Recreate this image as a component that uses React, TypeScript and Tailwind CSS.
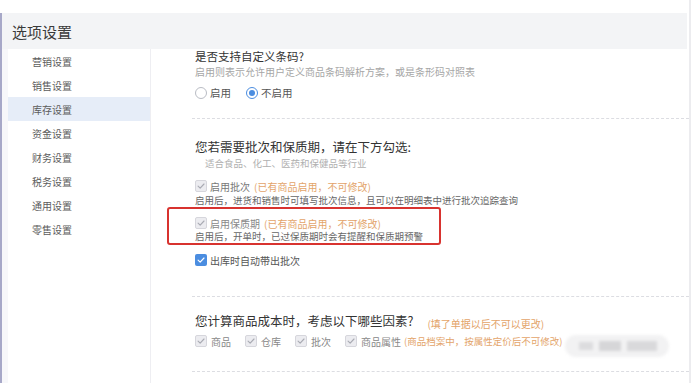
import type { ReactNode } from "react";

const menuItems = [
  "营销设置",
  "销售设置",
  "库存设置",
  "资金设置",
  "财务设置",
  "税务设置",
  "通用设置",
  "零售设置",
];

function CheckMark({ color }: { color: string }) {
  return (
    <svg viewBox="0 0 12 12" className="h-[10px] w-[10px]">
      <path
        d="M2.5 6.2 L5 8.6 L9.6 3.6"
        fill="none"
        stroke={color}
        strokeWidth="1.4"
        strokeLinecap="round"
        strokeLinejoin="round"
      />
    </svg>
  );
}

function Checkbox({ checked = false, disabled = false }: { checked?: boolean; disabled?: boolean }) {
  if (disabled) {
    return (
      <span className="flex h-[12px] w-[12px] shrink-0 items-center justify-center rounded-[2px] border border-[#d6d6dc] bg-[#ececf0]">
        <CheckMark color="#a9abb3" />
      </span>
    );
  }
  return (
    <span className="flex h-[12px] w-[12px] shrink-0 items-center justify-center rounded-[2px] bg-[#4b8de0]">
      {checked && <CheckMark color="#ffffff" />}
    </span>
  );
}

function Radio({ checked = false }: { checked?: boolean }) {
  return (
    <span
      className={
        checked
          ? "flex h-[12px] w-[12px] items-center justify-center rounded-full border border-[#4b8de0] bg-white"
          : "flex h-[12px] w-[12px] items-center justify-center rounded-full border border-[#b9bcc4] bg-white"
      }
    >
      {checked && <span className="h-[6px] w-[6px] rounded-full bg-[#4b8de0]" />}
    </span>
  );
}

function Note({ children }: { children: ReactNode }) {
  return <span className="text-[10px] text-[#e3a46a]">{children}</span>;
}

function Dashed() {
  return <div className="-ml-[3px] border-t border-dashed border-[#dcdde2]" />;
}

export default function App() {
  return (
    <div className="flex h-[383px] w-[692px] overflow-hidden bg-white font-['Noto_Sans_CJK_SC',sans-serif] text-[#333]">
      <div className="flex w-[689px] flex-col">
        <div className="h-[13px]" />
        <div className="flex flex-1 flex-col border-l-2 border-[#a7a8c8]">
          <header className="flex h-[36px] w-[685px] items-center bg-[#f3f4f6] pl-[10px]">
            <h1 className="text-[15px] leading-none text-[#3a3a3a]">选项设置</h1>
          </header>

          <div className="flex flex-1">
            <div className="w-[6px] bg-[#f7f7fa]" />
            <nav className="flex w-[143px] flex-col border-r border-[#eeeef2]">
              {menuItems.map((item) => (
                <div
                  key={item}
                  className={
                    item === "库存设置"
                      ? "flex h-[24px] items-center bg-[#e6edf8] pl-[24px] text-[10px] text-[#5c5c5c]"
                      : "flex h-[24px] items-center pl-[24px] text-[10px] text-[#5c5c5c]"
                  }
                >
                  {item}
                </div>
              ))}
            </nav>

            <main className="flex-1 pl-[44px]">
              <div className="flex flex-col">
                <h2 className="text-[11.5px] leading-[14px] text-[#333]">是否支持自定义条码?</h2>
                <p className="mt-[2px] text-[10px] leading-[14px] text-[#a6a6a6]">
                  启用则表示允许用户定义商品条码解析方案，或是条形码对照表
                </p>
                <div className="mt-[6px] flex h-[16px] items-center text-[10.5px] text-[#555]">
                  <Radio />
                  <span className="ml-[3px]">启用</span>
                  <span className="ml-[15px]">
                    <Radio checked />
                  </span>
                  <span className="ml-[3px]">不启用</span>
                </div>

                <div className="mt-[17px]">
                  <Dashed />
                </div>

                <h2 className="mt-[20px] text-[12.5px] leading-[16px] text-[#333]">
                  您若需要批次和保质期，请在下方勾选:
                </h2>
                <p className="mt-[1px] pl-[10px] text-[9.5px] leading-[14px] text-[#b0b0b0]">
                  适合食品、化工、医药和保健品等行业
                </p>

                <div className="mt-[9px] flex h-[14px] items-center text-[10px]">
                  <Checkbox disabled />
                  <span className="ml-[3px] text-[#777]">启用批次</span>
                  <span className="ml-[4px]">
                    <Note>(已有商品启用，不可修改)</Note>
                  </span>
                </div>
                <p className="text-[9.5px] leading-[14px] text-[#666]">
                  启用后，进货和销售时可填写批次信息，且可以在明细表中进行批次追踪查询
                </p>

                <div className="-ml-[28px] w-[274px] rounded-[3px] border-2 border-[#d8332f] pb-[1px] pl-[26px] pt-[7px]">
                  <div className="flex h-[14px] items-center text-[10px]">
                    <Checkbox disabled />
                    <span className="ml-[3px] text-[#888]">启用保质期</span>
                    <span className="ml-[4px]">
                      <Note>(已有商品启用，不可修改)</Note>
                    </span>
                  </div>
                  <p className="text-[9.5px] leading-[12px] text-[#666]">
                    启用后，开单时，已过保质期时会有提醒和保质期预警
                  </p>
                </div>

                <div className="mt-[8px] flex h-[14px] items-center text-[10px]">
                  <Checkbox checked />
                  <span className="ml-[3px] text-[#555]">出库时自动带出批次</span>
                </div>

                <div className="mt-[29px]">
                  <Dashed />
                </div>

                <div className="mt-[16px] flex h-[16px] items-center">
                  <h2 className="text-[12.5px] leading-[16px] text-[#333]">
                    您计算商品成本时，考虑以下哪些因素?
                  </h2>
                  <span className="ml-[14px]">
                    <Note>(填了单据以后不可以更改)</Note>
                  </span>
                </div>

                <div className="mt-[5px] flex h-[14px] items-center text-[10px] text-[#888]">
                  <Checkbox disabled />
                  <span className="ml-[4px]">商品</span>
                  <span className="ml-[14px]">
                    <Checkbox disabled />
                  </span>
                  <span className="ml-[4px]">仓库</span>
                  <span className="ml-[14px]">
                    <Checkbox disabled />
                  </span>
                  <span className="ml-[4px]">批次</span>
                  <span className="ml-[14px]">
                    <Checkbox disabled />
                  </span>
                  <span className="ml-[4px]">商品属性</span>
                  <span className="ml-[3px] text-[9.5px] text-[#e3a46a]">
                    (商品档案中，按属性定价后不可修改)
                  </span>
                </div>

                <div className="mt-[23px]">
                  <Dashed />
                </div>
              </div>
            </main>
          </div>
        </div>
      </div>
      <div className="w-[2px] bg-[#ececef]" />

      {/* blurred redaction */}
      <div className="pointer-events-none absolute left-[565px] top-[335px] flex h-[22px] w-[104px] items-center gap-[6px] rounded-full bg-[#f2f2f3] pl-[14px] blur-[1.5px]">
        <span className="h-[8px] w-[14px] bg-[#dcdcde]" />
        <span className="h-[10px] w-[22px] bg-[#d6d6d8]" />
        <span className="h-[10px] w-[30px] bg-[#d9d9db]" />
      </div>
    </div>
  );
}
